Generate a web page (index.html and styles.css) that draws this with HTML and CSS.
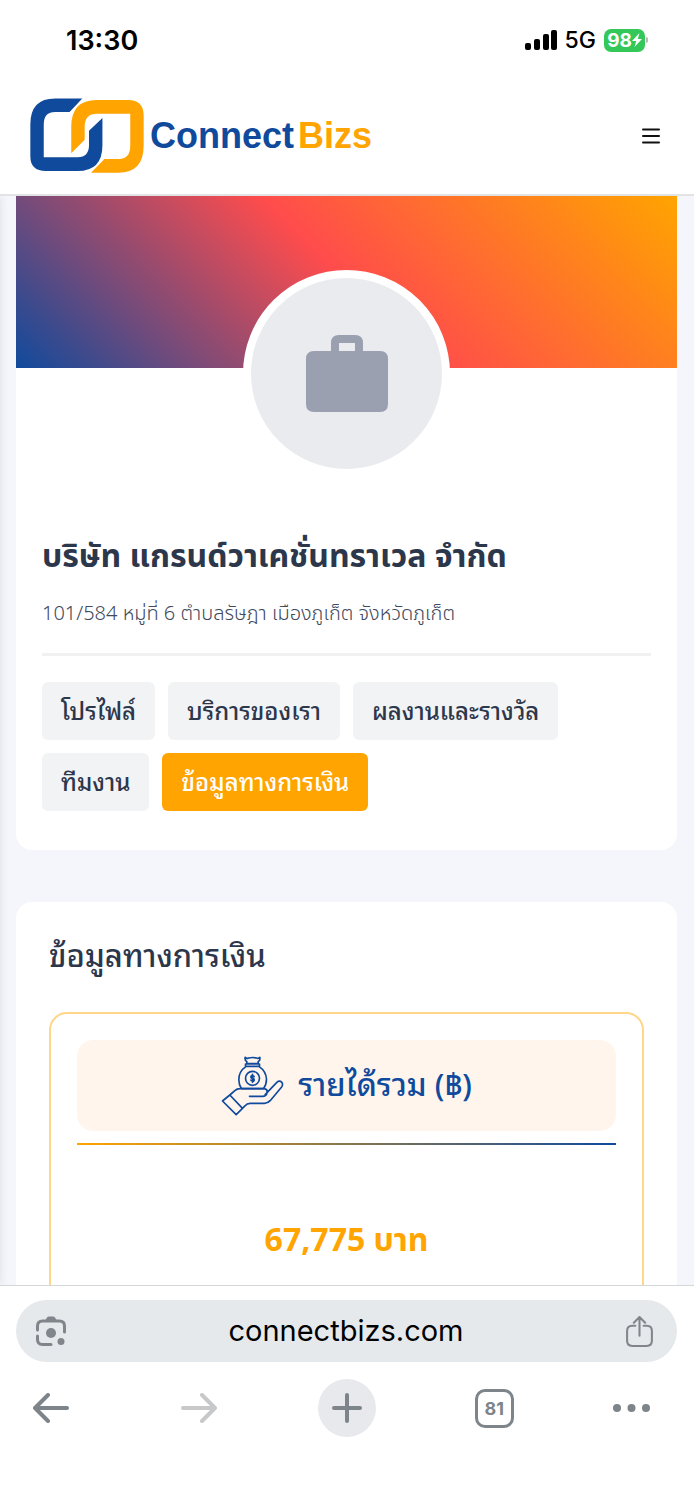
FILE: index.html
```html
<!DOCTYPE html>
<html lang="th">
<head>
<meta charset="utf-8">
<meta name="viewport" content="width=device-width, initial-scale=1">
<title>ConnectBizs</title>
<link rel="stylesheet" href="styles.css">
</head>
<body>
<div class="status">
  <span class="clock">13:30</span>
  <div class="status-right">
    <svg class="signal" viewBox="0 0 32 20" aria-hidden="true"><rect x="0" y="13" width="6" height="7" rx="2"/><rect x="9" y="9" width="6" height="11" rx="2"/><rect x="18" y="4" width="6" height="16" rx="2"/><rect x="26" y="0" width="6" height="20" rx="2"/></svg>
    <span class="network">5G</span>
    <span class="battery"><span class="battery-body">98<svg viewBox="0 0 10 14" aria-hidden="true"><path d="M7.500 0 0 8h4.200L2.500 14 10 6H5.800z"/></svg></span><span class="battery-tip"></span></span>
  </div>
</div>
<header class="site-header">
  <a class="brand" href="#">
    <svg class="brand-mark" viewBox="32 40 340 222" aria-hidden="true">
      <path fill="#104a9c" d="M188 41H107Q33 41 33 118V213Q33 257 79 257H174Q248 257 248 180V99L208 137V180Q208 215 174 216H73V118Q73 81 107 81H150Z"/>
      <path fill="#ffa400" d="M155 204V125Q155 45 231 45H325Q371 45 371 92V181Q371 262 296 262H214L254 221H298Q331 221 331 181V86H232Q195 86 195 125V164Z"/>
    </svg>
    <span class="brand-name">Connect<span class="brand-accent">Bizs</span></span>
  </a>
  <button class="menu" type="button" aria-label="เมนู">
    <svg viewBox="0 0 18 16" aria-hidden="true"><path d="M1 1.500h16M1 8h16M1 14.500h16"/></svg>
  </button>
</header>
<main class="page">
  <section class="card profile">
    <div class="banner"></div>
    <div class="avatar">
      <svg viewBox="0 0 82 78" aria-hidden="true"><path fill-rule="evenodd" d="M8 16H25V8Q25 0 33 0H49Q57 0 57 8V16H74Q82 16 82 24V69Q82 77 74 77H8Q0 77 0 69V24Q0 16 8 16ZM33 8V16H49V8Z"/></svg>
    </div>
    <div class="profile-body">
      <h1 class="company">บริษัท แกรนด์วาเคชั่นทราเวล จำกัด</h1>
      <p class="address">101/584 หมู่ที่ 6 ตำบลรัษฎา เมืองภูเก็ต จังหวัดภูเก็ต</p>
      <nav class="tabs">
        <a class="tab" href="#">โปรไฟล์</a>
        <a class="tab" href="#">บริการของเรา</a>
        <a class="tab" href="#">ผลงานและรางวัล</a>
        <a class="tab" href="#">ทีมงาน</a>
        <a class="tab active" href="#" aria-current="page">ข้อมูลทางการเงิน</a>
      </nav>
    </div>
  </section>
  <section class="card finance">
    <h2 class="section-title">ข้อมูลทางการเงิน</h2>
    <div class="metric">
      <div class="metric-head">
        <svg class="money" viewBox="60 45 188 180" aria-hidden="true">
          <path d="M132 49Q137 54 142 51Q154 48 166 51Q172 54 176 49Q178 57 171 62V68H137V62Q130 57 132 49ZM133 69H175V76H133ZM134 77Q113 91 113 116Q113 132 121 143H187Q196 131 196 115Q195 91 174 77"/>
          <circle cx="154" cy="112" r="21"/>
          <path d="M159 107Q158 104 154 104Q149 104 149 108T154 112T159 117T154 120Q149 120 149 117M154 100V124"/>
          <path d="M86 162L101 149Q107 143 117 143H189Q199 144 198 154Q196 166 184 166H145M192 161 227 124Q235 117 242 124Q246 130 242 137L207 179Q200 187 190 187H147Q137 187 132 194L124 202M86 162 124 202 105 221 64 180Z"/>
        </svg>
        <h3 class="metric-title">รายได้รวม (฿)</h3>
      </div>
      <div class="metric-rule"></div>
      <p class="metric-value">67,775 บาท</p>
    </div>
  </section>
  <div class="edge-shadow"></div>
</main>
<footer class="browser">
  <div class="url-bar">
    <button class="icon-button" type="button" aria-label="ค้นหาด้วยรูปภาพ">
      <svg class="lens" viewBox="0 0 30 30" aria-hidden="true"><path class="line" d="M1.500 14V10Q1.500 5 6.500 5H23.500Q28.500 5 28.500 10V16M1.500 20V23.500Q1.500 28.500 6.500 28.500H15"/><path d="M8 5Q10 4 11 1.500Q11.500.500 13 .500H17Q18.500.500 19 1.500Q20 4 22 5Z"/><circle cx="15" cy="17" r="5"/><circle cx="25" cy="25.500" r="3.500"/></svg>
    </button>
    <span class="url">connectbizs.com</span>
    <button class="icon-button" type="button" aria-label="แชร์">
      <svg class="share" viewBox="0 0 26 30" aria-hidden="true"><path d="M9 9.500H6Q1 9.500 1 14.500V24Q1 29 6 29H20Q25 29 25 24V14.500Q25 9.500 20 9.500H17M13 19V1M7.500 6.500 13 1 18.500 6.500"/></svg>
    </button>
  </div>
  <div class="toolbar">
    <button class="tool" type="button" aria-label="ย้อนกลับ"><svg class="arrow" viewBox="0 0 36 30" aria-hidden="true"><path d="M34 15H2M15 2 2 15 15 28"/></svg></button>
    <button class="tool" type="button" aria-label="ไปข้างหน้า" disabled><svg class="arrow" viewBox="0 0 36 30" aria-hidden="true"><path d="M2 15H34M21 2 34 15 21 28"/></svg></button>
    <button class="tool new-tab" type="button" aria-label="แท็บใหม่"><svg viewBox="0 0 30 30" aria-hidden="true"><path d="M15 2V28M2 15H28"/></svg></button>
    <button class="tool" type="button" aria-label="แท็บ"><span class="tab-count">81</span></button>
    <button class="tool more" type="button" aria-label="เพิ่มเติม"><svg class="dots" viewBox="0 0 37 8" aria-hidden="true"><circle cx="4" cy="4" r="4"/><circle cx="18.500" cy="4" r="4"/><circle cx="33" cy="4" r="4"/></svg></button>
  </div>
</footer>
</body>
</html>
```
FILE: styles.css
```css
* { box-sizing: border-box; }
body {
  margin: 0;
  height: 100vh;
  display: flex;
  flex-direction: column;
  overflow: hidden;
  background: #fff;
  color: #2d374b;
  font-family: "Noto Sans Thai", "Noto Sans", "Liberation Sans", sans-serif;
}
h1, h2, h3, p { margin: 0; }
button { padding: 0; border: 0; background: none; color: inherit; font: inherit; }
a { color: inherit; text-decoration: none; }
svg { display: block; }

.status {
  flex: none;
  height: 80px;
  padding: 0 46px 0 66px;
  display: flex;
  align-items: center;
  justify-content: space-between;
  color: #000;
  font-family: Inter, sans-serif;
}
.clock { font-size: 27px; font-weight: 600; }
.status-right { display: flex; align-items: center; gap: 8px; }
.signal { width: 32px; height: 20px; }
.network { font-size: 23px; font-weight: 500; }
.battery { display: flex; align-items: center; gap: 1px; }
.battery-body {
  display: flex;
  align-items: center;
  justify-content: center;
  width: 41px;
  height: 23px;
  border-radius: 7px;
  background: #34c759;
  color: #fff;
  font-size: 19px;
  font-weight: 700;
}
.battery-body svg { width: 10px; height: 14px; fill: #fff; }
.battery-tip { width: 2px; height: 6px; border-radius: 0 2px 2px 0; background: #b8b8b8; }

.site-header {
  flex: none;
  height: 116px;
  padding: 0 34px 0 30px;
  display: flex;
  align-items: center;
  justify-content: space-between;
  border-bottom: 2px solid #e2e3e5;
}
.brand { display: flex; align-items: center; gap: 6px; padding-bottom: 4px; }
.brand-mark { width: 114px; height: 75px; }
.brand-name {
  display: flex;
  gap: 4px;
  padding-top: 2px;
  color: #104a9c;
  font: bold 36px/40px "Liberation Sans", sans-serif;
}
.brand-accent { color: #ffa400; }
.menu svg { width: 18px; height: 16px; fill: none; stroke: #111; stroke-width: 2; stroke-linecap: round; }
.menu { padding-bottom: 2px; }

.page {
  flex: 1;
  min-height: 0;
  overflow: hidden;
  position: relative;
  padding: 0 17px 0 16px;
  background: #f5f6fb;
}
.edge-shadow {
  position: absolute;
  top: 0;
  bottom: 0;
  left: -8px;
  width: 8px;
  box-shadow: 0 0 8px rgba(30, 40, 60, .12);
}
.card { background: #fff; border-radius: 16px; }
.profile { border-radius: 0 0 16px 16px; padding-bottom: 39px; }
.banner { height: 172px; background: linear-gradient(45deg, #104a9c 0%, #ff4c4c 50%, #ffa400 100%); }
.avatar {
  width: 207px;
  height: 207px;
  margin: -98px auto 0;
  border: 8px solid #fff;
  border-radius: 50%;
  position: relative;
  display: flex;
  align-items: center;
  justify-content: center;
  background: #eaebef;
}
.avatar svg { width: 82px; height: 78px; fill: #9aa0af; }
.profile-body { padding: 52px 26px 0; }
.company { font-size: 32px; line-height: 56px; font-weight: 700; }
.address {
  padding: 13px 0 23px;
  border-bottom: 3px solid #f1f1f2;
  color: #41495c;
  font-size: 20px;
  line-height: 32px;
  font-weight: 300;
}
.tabs { display: flex; flex-wrap: wrap; gap: 13px; padding-top: 26px; }
.tab {
  padding: 11px 19px 15px;
  border-radius: 6px;
  background: #f2f3f5;
  font-family: "Noto Sans Thai Looped", "Noto Looped Thai", Loma, Garuda, "Noto Sans Thai", "Noto Sans", sans-serif;
  font-size: 24px;
  line-height: 32px;
  font-weight: 500;
}
.tab.active { background: #ffa400; color: #fff; }

.finance { margin-top: 52px; padding: 28px 33px; }
.section-title, .metric-title {
  font-family: "Noto Sans Thai Looped", "Noto Looped Thai", Loma, Garuda, "Noto Sans Thai", "Noto Sans", sans-serif;
  font-size: 31px;
  line-height: 46px;
  font-weight: 500;
}
.metric-title { padding-bottom: 7px; }
.metric { margin-top: 36px; padding: 26px; border: 2px solid #ffd68a; border-radius: 18px; }
.metric-head {
  height: 91px;
  display: flex;
  align-items: center;
  justify-content: center;
  gap: 14px;
  border-radius: 16px;
  background: #fff5ec;
  color: #104a9c;
}
.money { width: 63px; height: 60px; fill: none; stroke: #104a9c; stroke-width: 5; stroke-linejoin: round; stroke-linecap: round; }
.metric-rule { height: 2px; margin-top: 12px; background: linear-gradient(90deg, #ffa400, #104a9c); }
.metric-value {
  padding: 72px 0;
  color: #ffa400;
  text-align: center;
  font-size: 32px;
  line-height: 48px;
  font-weight: 700;
}

.browser { flex: none; padding: 14px 17px 63px 16px; border-top: 1px solid #d4d7da; background: #fff; }
.url-bar {
  height: 62px;
  padding: 0 24px 0 20px;
  display: flex;
  align-items: center;
  justify-content: space-between;
  border-radius: 31px;
  background: #e6e9ec;
}
.url { color: #000; font: 29px/36px Inter, sans-serif; }
.lens { width: 30px; height: 30px; fill: #80868b; }
.lens .line { fill: none; stroke: #80868b; stroke-width: 3; stroke-linecap: round; }
.share { width: 27px; height: 31px; fill: none; stroke: #80868b; stroke-width: 2; stroke-linecap: round; stroke-linejoin: round; }
.toolbar { display: flex; justify-content: space-between; padding: 17px 6px 0; }
.tool {
  width: 58px;
  height: 58px;
  display: flex;
  align-items: center;
  justify-content: center;
  border-radius: 50%;
  color: #7d858a;
}
.tool:disabled { color: #c7c8ca; }
.tool path { fill: none; stroke: currentColor; stroke-width: 4; stroke-linecap: round; stroke-linejoin: round; }
.new-tab { background: #e8e9ed; }
.new-tab svg { width: 30px; height: 30px; }
.more { justify-content: flex-start; }
.arrow { width: 36px; height: 30px; }
.tab-count {
  width: 39px;
  height: 39px;
  border: 3px solid currentColor;
  border-radius: 10px;
  text-align: center;
  font: bold 18px/34px Inter, sans-serif;
}
.dots { width: 37px; height: 8px; fill: currentColor; }
```
